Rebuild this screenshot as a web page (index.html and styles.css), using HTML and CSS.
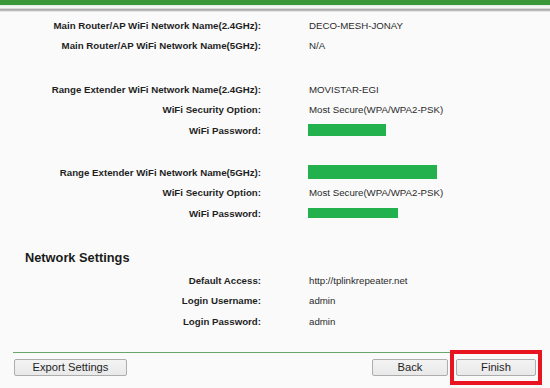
FILE: index.html
```html
<!DOCTYPE html>
<html>
<head>
<meta charset="utf-8">
<link rel="stylesheet" href="styles.css">
</head>
<body>
<div class="page">
  <div class="topbar"></div>
  <div class="topline"></div>
  <div class="content">
    <div class="row"><div class="label">Main Router/AP WiFi Network Name(2.4GHz):</div><div class="value">DECO-MESH-JONAY</div></div>
    <div class="row"><div class="label">Main Router/AP WiFi Network Name(5GHz):</div><div class="value">N/A</div></div>
    <div class="gap-a"></div>
    <div class="row"><div class="label">Range Extender WiFi Network Name(2.4GHz):</div><div class="value">MOVISTAR-EGI</div></div>
    <div class="row"><div class="label">WiFi Security Option:</div><div class="value">Most Secure(WPA/WPA2-PSK)</div></div>
    <div class="row"><div class="label">WiFi Password:</div><div class="value"><span class="mask mask-1"></span></div></div>
    <div class="gap-b"></div>
    <div class="row"><div class="label">Range Extender WiFi Network Name(5GHz):</div><div class="value"><span class="mask mask-2"></span></div></div>
    <div class="row"><div class="label">WiFi Security Option:</div><div class="value">Most Secure(WPA/WPA2-PSK)</div></div>
    <div class="row"><div class="label">WiFi Password:</div><div class="value"><span class="mask mask-3"></span></div></div>
    <h2 class="heading">Network Settings</h2>
    <div class="row"><div class="label">Default Access:</div><div class="value">http://tplinkrepeater.net</div></div>
    <div class="row"><div class="label">Login Username:</div><div class="value">admin</div></div>
    <div class="row"><div class="label">Login Password:</div><div class="value">admin</div></div>
    <div class="divider"></div>
    <div class="footer">
      <button class="btn btn-export">Export Settings</button>
      <div class="spacer"></div>
      <button class="btn btn-back">Back</button>
      <div class="highlight"><button class="btn btn-finish">Finish</button></div>
    </div>
  </div>
</div>
</body>
</html>
```
FILE: styles.css
```css
html, body {
  margin: 0;
  padding: 0;
  background: #fafafa;
}
.page {
  width: 550px;
  height: 388px;
  overflow: hidden;
  font-family: "Liberation Sans", Arial, sans-serif;
  color: #2a2a2a;
  background: #fafafa;
}
.topbar {
  height: 5px;
  background: #3a983a;
}
.topline {
  height: 7px;
  background: linear-gradient(#dcecd8 0, #f4f4f4 1px, #f6f6f6 3px, #bdbdbd 4px, #9a9a9a 5px, #d9d9d9 6px, #f3f3f3 7px);
}
.content {
  padding-top: 2.75px;
}
.row {
  height: 20.5px;
  display: flex;
  align-items: center;
  font-size: 9.7px;
}
.label {
  width: 261px;
  text-align: right;
  font-weight: bold;
  color: #1f1f1f;
  white-space: nowrap;
}
.value {
  margin-left: 48px;
  color: #2a2a2a;
  white-space: nowrap;
  display: flex;
  align-items: center;
}
.gap-a { height: 23px; }
.gap-b { height: 21.5px; }
.mask {
  display: block;
  background: #22b14c;
  margin-left: -1px;
}
.mask-1 { width: 78px; height: 12px; }
.mask-2 { width: 129px; height: 14px; }
.mask-3 { width: 90px; height: 10px; }
.heading {
  margin: 22.75px 0 0 0;
  padding-left: 25px;
  height: 24px;
  line-height: 24px;
  font-size: 12.8px;
  font-weight: bold;
  color: #1a1a1a;
}
.divider {
  margin: 20.25px 10px 1px 13px;
  height: 1px;
  background: #6aa66a;
}
.footer {
  display: flex;
  align-items: center;
  height: 28px;
  padding-left: 14px;
  padding-right: 8px;
}
.spacer { flex: 1; }
.btn {
  height: 17px;
  padding: 0;
  margin: 0;
  font-family: "Liberation Sans", Arial, sans-serif;
  font-size: 11.2px;
  color: #1f1f1f;
  background: linear-gradient(#f3f3f3, #e9e9e9);
  border: 1px solid #adadad;
  border-radius: 2px;
  line-height: 15px;
}
.btn-export { width: 113px; }
.btn-back { width: 76px; margin-right: 2px; }
.btn-finish { width: 80px; display: block; }
.highlight {
  border: 4px solid #e8141f;
  padding: 5px 2px;
}
```
